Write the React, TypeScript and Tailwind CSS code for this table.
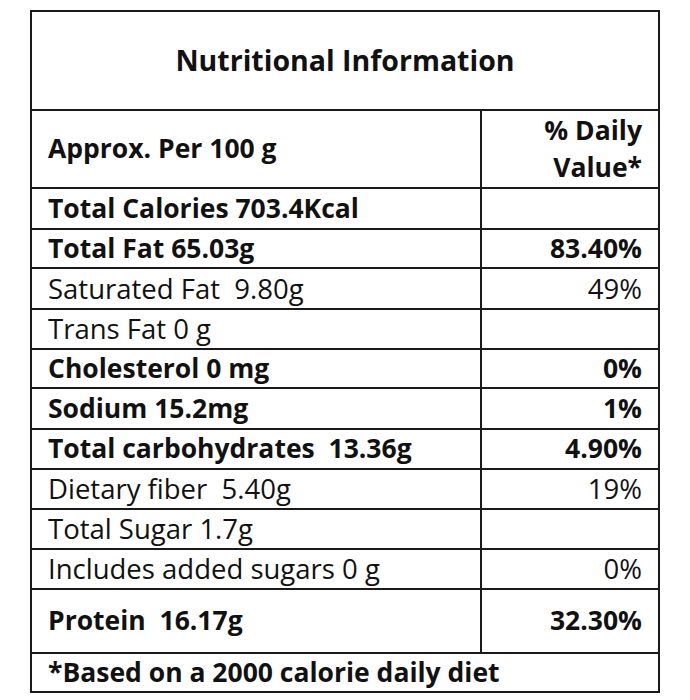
const rows = [
  { label: "Total Calories 703.4Kcal", value: "", bold: true, h: "h-[41px]" },
  { label: "Total Fat 65.03g", value: "83.40%", bold: true, h: "h-[39px]" },
  { label: "Saturated Fat  9.80g", value: "49%", bold: false, h: "h-[41px]" },
  { label: "Trans Fat 0 g", value: "", bold: false, h: "h-[40px]" },
  { label: "Cholesterol 0 mg", value: "0%", bold: true, h: "h-[39px]" },
  { label: "Sodium 15.2mg", value: "1%", bold: true, h: "h-[41px]" },
  { label: "Total carbohydrates  13.36g", value: "4.90%", bold: true, h: "h-[40px]" },
  { label: "Dietary fiber  5.40g", value: "19%", bold: false, h: "h-[40px]" },
  { label: "Total Sugar 1.7g", value: "", bold: false, h: "h-[40px]" },
  { label: "Includes added sugars 0 g", value: "0%", bold: false, h: "h-[40px]" },
  { label: "Protein  16.17g", value: "32.30%", bold: true, h: "h-[64px]" },
];

const App = () => {
  return (
    <div className="w-[690px] h-[700px] bg-white pt-[10px] pl-[30px] font-['Open_Sans',sans-serif] text-[#111]">
      <div className="w-[630px] border-2 border-[#1a1a1a] flex flex-col">
        <div className="h-[97px] flex items-center justify-center text-[28.5px] font-bold">
          Nutritional Information
        </div>

        <div className="h-[78px] flex border-t-2 border-[#1a1a1a]">
          <div className="flex-1 flex items-center pl-4 text-[26.5px] font-bold">
            Approx. Per 100 g
          </div>
          <div className="w-[178px] border-l-2 border-[#1a1a1a] flex flex-col justify-center items-end pr-4 text-[26.5px] font-bold leading-[37px]">
            <span>% Daily</span>
            <span>Value*</span>
          </div>
        </div>

        {rows.map((r) => (
          <div key={r.label} className={`${r.h} flex border-t-2 border-[#1a1a1a]`}>
            <div
              className={`flex-1 flex items-center pl-4 whitespace-pre ${
                r.bold ? "text-[26.5px] font-bold" : "text-[27.5px] font-normal"
              }`}>
              {r.label}
            </div>
            <div
              className={`w-[178px] border-l-2 border-[#1a1a1a] flex items-center justify-end pr-4 ${
                r.bold ? "text-[26.5px] font-bold" : "text-[27.5px] font-normal"
              }`}>
              {r.value}
            </div>
          </div>
        ))}

        <div className="h-[39px] flex items-center pl-4 border-t-2 border-[#1a1a1a] text-[26.5px] font-bold">
          *Based on a 2000 calorie daily diet
        </div>
      </div>
    </div>
  );
};

export default App;
